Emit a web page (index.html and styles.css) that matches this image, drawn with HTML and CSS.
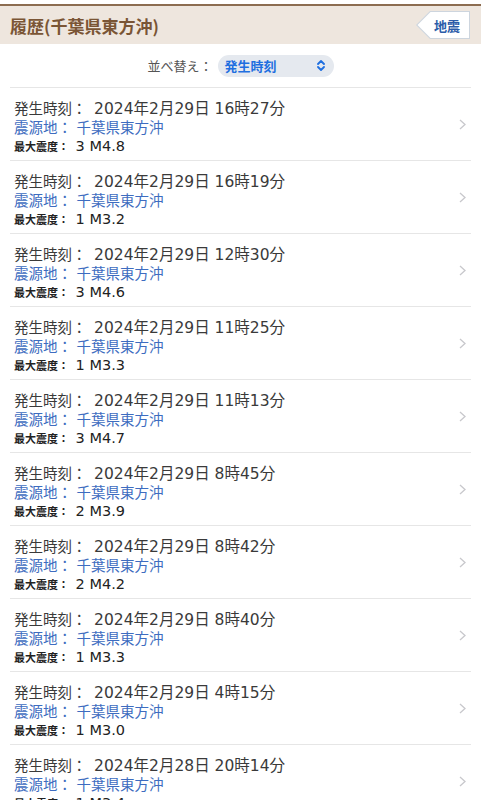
FILE: index.html
```html
<!DOCTYPE html>
<html lang="ja">
<head>
    <meta charset="UTF-8">
    <meta name="viewport" content="width=device-width, initial-scale=1.0">
    <title>履歴(千葉県東方沖)</title>
    <link rel="stylesheet" href="styles.css">
</head>
<body>
    <div class="header">
        <h1>履歴(千葉県東方沖)</h1>
        <a class="back" href="#"><span class="back-in">地震</span></a>
    </div>

    <div class="sort">
        <span class="sort-label">並べ替え：</span>
        <div class="select">
            <span>発生時刻</span>
            <svg width="8" height="11" viewBox="0 0 8 11">
                <polyline points="1,4 4,1 7,4" fill="none" stroke="#1f6fe0" stroke-width="1.8" stroke-linecap="round" stroke-linejoin="round"/>
                <polyline points="1,7 4,10 7,7" fill="none" stroke="#1f6fe0" stroke-width="1.8" stroke-linecap="round" stroke-linejoin="round"/>
            </svg>
        </div>
    </div>

    <ul class="list">
        <li class="item">
            <div class="info">
                <div class="time">発生時刻： <span class="val">2024年2月29日 16時27分</span></div>
                <div class="place">震源地： 千葉県東方沖</div>
                <div class="scale"><b>最大震度：</b> 3 M4.8</div>
            </div>
            <svg class="arrow" width="7" height="11" viewBox="0 0 7 11"><polyline points="1,1 6,5.5 1,10" fill="none" stroke="#c8c8cc" stroke-width="1.3"/></svg>
        </li>
        <li class="item">
            <div class="info">
                <div class="time">発生時刻： <span class="val">2024年2月29日 16時19分</span></div>
                <div class="place">震源地： 千葉県東方沖</div>
                <div class="scale"><b>最大震度：</b> 1 M3.2</div>
            </div>
            <svg class="arrow" width="7" height="11" viewBox="0 0 7 11"><polyline points="1,1 6,5.5 1,10" fill="none" stroke="#c8c8cc" stroke-width="1.3"/></svg>
        </li>
        <li class="item">
            <div class="info">
                <div class="time">発生時刻： <span class="val">2024年2月29日 12時30分</span></div>
                <div class="place">震源地： 千葉県東方沖</div>
                <div class="scale"><b>最大震度：</b> 3 M4.6</div>
            </div>
            <svg class="arrow" width="7" height="11" viewBox="0 0 7 11"><polyline points="1,1 6,5.5 1,10" fill="none" stroke="#c8c8cc" stroke-width="1.3"/></svg>
        </li>
        <li class="item">
            <div class="info">
                <div class="time">発生時刻： <span class="val">2024年2月29日 11時25分</span></div>
                <div class="place">震源地： 千葉県東方沖</div>
                <div class="scale"><b>最大震度：</b> 1 M3.3</div>
            </div>
            <svg class="arrow" width="7" height="11" viewBox="0 0 7 11"><polyline points="1,1 6,5.5 1,10" fill="none" stroke="#c8c8cc" stroke-width="1.3"/></svg>
        </li>
        <li class="item">
            <div class="info">
                <div class="time">発生時刻： <span class="val">2024年2月29日 11時13分</span></div>
                <div class="place">震源地： 千葉県東方沖</div>
                <div class="scale"><b>最大震度：</b> 3 M4.7</div>
            </div>
            <svg class="arrow" width="7" height="11" viewBox="0 0 7 11"><polyline points="1,1 6,5.5 1,10" fill="none" stroke="#c8c8cc" stroke-width="1.3"/></svg>
        </li>
        <li class="item">
            <div class="info">
                <div class="time">発生時刻： <span class="val">2024年2月29日 8時45分</span></div>
                <div class="place">震源地： 千葉県東方沖</div>
                <div class="scale"><b>最大震度：</b> 2 M3.9</div>
            </div>
            <svg class="arrow" width="7" height="11" viewBox="0 0 7 11"><polyline points="1,1 6,5.5 1,10" fill="none" stroke="#c8c8cc" stroke-width="1.3"/></svg>
        </li>
        <li class="item">
            <div class="info">
                <div class="time">発生時刻： <span class="val">2024年2月29日 8時42分</span></div>
                <div class="place">震源地： 千葉県東方沖</div>
                <div class="scale"><b>最大震度：</b> 2 M4.2</div>
            </div>
            <svg class="arrow" width="7" height="11" viewBox="0 0 7 11"><polyline points="1,1 6,5.5 1,10" fill="none" stroke="#c8c8cc" stroke-width="1.3"/></svg>
        </li>
        <li class="item">
            <div class="info">
                <div class="time">発生時刻： <span class="val">2024年2月29日 8時40分</span></div>
                <div class="place">震源地： 千葉県東方沖</div>
                <div class="scale"><b>最大震度：</b> 1 M3.3</div>
            </div>
            <svg class="arrow" width="7" height="11" viewBox="0 0 7 11"><polyline points="1,1 6,5.5 1,10" fill="none" stroke="#c8c8cc" stroke-width="1.3"/></svg>
        </li>
        <li class="item">
            <div class="info">
                <div class="time">発生時刻： <span class="val">2024年2月29日 4時15分</span></div>
                <div class="place">震源地： 千葉県東方沖</div>
                <div class="scale"><b>最大震度：</b> 1 M3.0</div>
            </div>
            <svg class="arrow" width="7" height="11" viewBox="0 0 7 11"><polyline points="1,1 6,5.5 1,10" fill="none" stroke="#c8c8cc" stroke-width="1.3"/></svg>
        </li>
        <li class="item">
            <div class="info">
                <div class="time">発生時刻： <span class="val">2024年2月28日 20時14分</span></div>
                <div class="place">震源地： 千葉県東方沖</div>
                <div class="scale"><b>最大震度：</b> 1 M3.4</div>
            </div>
            <svg class="arrow" width="7" height="11" viewBox="0 0 7 11"><polyline points="1,1 6,5.5 1,10" fill="none" stroke="#c8c8cc" stroke-width="1.3"/></svg>
        </li>
    </ul>
</body>
</html>
```

FILE: styles.css
```css
body {
    font-family: 'DejaVu Sans', 'Noto Sans CJK JP', sans-serif;
    background-color: #fff;
    margin: 0;
    padding: 4px 0 0 0;
}

.header {
    background-color: #eee6de;
    border-top: 2px solid #8c6c50;
    height: 38px;
    display: flex;
    align-items: center;
    justify-content: space-between;
    padding: 0 11px 0 10px;
}

h1 {
    margin: 0;
    font-family: 'Noto Sans CJK JP', sans-serif;
    font-size: 17px;
    font-weight: bold;
    color: #7a5535;
}

.back {
    display: flex;
    width: 54px;
    height: 28px;
    padding: 1px;
    box-sizing: border-box;
    background-color: #cdd5de;
    clip-path: polygon(14px 0, 100% 0, 100% 100%, 14px 100%, 0 50%);
    text-decoration: none;
}

.back-in {
    flex: 1;
    display: flex;
    align-items: center;
    justify-content: flex-end;
    padding-right: 9px;
    background-color: #fff;
    clip-path: polygon(13.5px 0, 100% 0, 100% 100%, 13.5px 100%, 0.5px 50%);
    font-family: 'Noto Sans CJK JP', sans-serif;
    font-size: 13px;
    font-weight: bold;
    color: #2b5ca8;
}

.sort {
    height: 43px;
    display: flex;
    align-items: center;
    justify-content: center;
    gap: 5px;
}

.sort-label {
    font-family: 'Noto Sans CJK JP', sans-serif;
    font-size: 13px;
    color: #555;
}

.select {
    width: 116px;
    height: 22px;
    box-sizing: border-box;
    padding: 0 9px 0 7px;
    border-radius: 11px;
    background-color: #e5e9ef;
    display: flex;
    align-items: center;
    justify-content: space-between;
    font-family: 'Noto Sans CJK JP', sans-serif;
    font-size: 13px;
    font-weight: bold;
    color: #1f6fe0;
}

.list {
    list-style: none;
    margin: 0 10px;
    padding: 0;
    border-top: 1px solid #e6e6e6;
}

.item {
    display: flex;
    align-items: center;
    justify-content: space-between;
    padding: 0 4px;
    border-bottom: 1px solid #e6e6e6;
}

.info {
    padding: 11px 0 6px 0;
}

.time {
    font-size: 14.5px;
    line-height: 20px;
    color: #3a3a3a;
}

.time .val {
    font-size: 15.5px;
    margin-left: 3px;
}

.place {
    font-size: 14.5px;
    line-height: 19px;
    color: #3d6cc0;
}

.scale {
    font-size: 14.5px;
    line-height: 16px;
    color: #222;
}

.scale b {
    font-family: 'Noto Sans CJK JP', sans-serif;
    font-size: 11px;
    margin-right: 2px;
}

.arrow {
    margin-right: 1px;
}
```
